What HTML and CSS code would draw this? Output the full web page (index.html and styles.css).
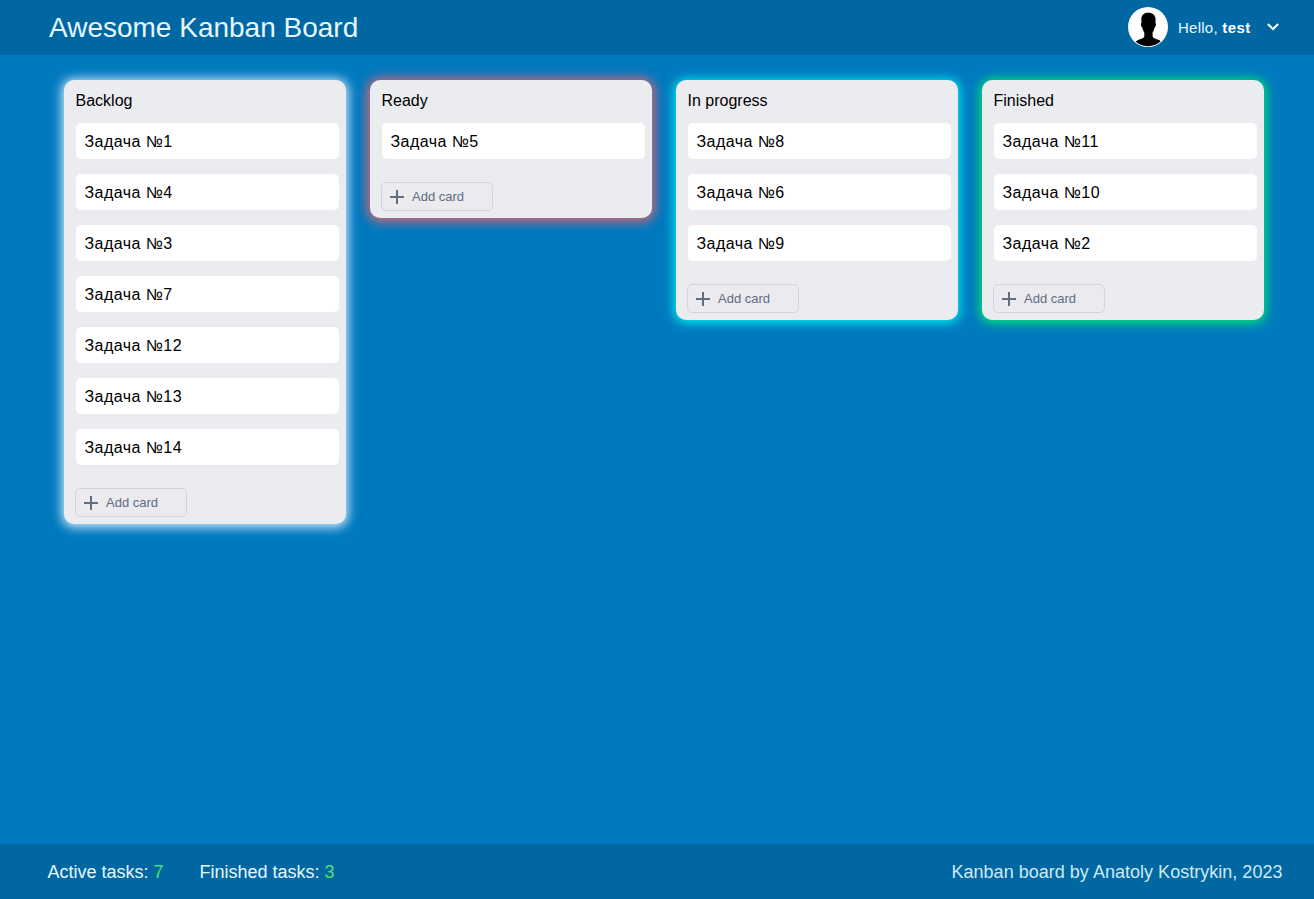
FILE: index.html
```html
<!DOCTYPE html>
<html lang="en">
<head>
<meta charset="utf-8">
<title>Awesome Kanban Board</title>
<link rel="stylesheet" href="styles.css">
</head>
<body>
<svg width="0" height="0" class="sprite">
  <symbol id="plus" viewBox="0 0 14 14"><path d="M6 0h2v6h6v2H8v6H6V8H0V6h6z" fill="currentColor"/></symbol>
</svg>
<header class="header">
  <h1 class="title">Awesome Kanban Board</h1>
  <div class="user">
    <svg class="avatar" viewBox="0 0 40 40">
      <defs><clipPath id="round"><circle cx="20" cy="20" r="19.2"/></clipPath></defs>
      <circle cx="20" cy="20" r="20" fill="#fff"/>
      <path clip-path="url(#round)" d="M20.200 5.800c-4.600 0-7 2.600-6.900 7l.2 3.200c-1 .3-.5 4 .8 4.500.4 2.200 1.100 3.800 2 4.900v3.400c0 1.800-1 2.500-3.300 3.100-2.600.7-4.600 1.500-6.500 4.100v6h28v-6c-1.900-2.600-4-3.400-6.600-4.100-2.300-.6-3.300-1.300-3.300-3.100v-3.400c.9-1.100 1.600-2.700 2-4.900 1.300-.5 1.800-4.200.8-4.500l.2-3.200c.1-4.400-2.800-7-7.400-7z" fill="#000"/>
    </svg>
    <span class="hello">Hello, <b>test</b></span>
    <svg class="chevron" viewBox="0 0 12 8"><path d="M.8 1l5.200 5 5.200-5" fill="none" stroke="#fff" stroke-width="2"/></svg>
  </div>
</header>
<main class="board">
  <section class="column backlog">
    <h2 class="name">Backlog</h2>
    <div class="cards">
      <div class="card">Задача №1</div><div class="card">Задача №4</div><div class="card">Задача №3</div><div class="card">Задача №7</div><div class="card">Задача №12</div><div class="card">Задача №13</div><div class="card">Задача №14</div>
    </div>
    <button class="add"><svg class="plus"><use href="#plus"/></svg>Add card</button>
  </section>
  <section class="column ready">
    <h2 class="name">Ready</h2>
    <div class="cards">
      <div class="card">Задача №5</div>
    </div>
    <button class="add"><svg class="plus"><use href="#plus"/></svg>Add card</button>
  </section>
  <section class="column progress">
    <h2 class="name">In progress</h2>
    <div class="cards">
      <div class="card">Задача №8</div><div class="card">Задача №6</div><div class="card">Задача №9</div>
    </div>
    <button class="add"><svg class="plus"><use href="#plus"/></svg>Add card</button>
  </section>
  <section class="column finished">
    <h2 class="name">Finished</h2>
    <div class="cards">
      <div class="card">Задача №11</div><div class="card">Задача №10</div><div class="card">Задача №2</div>
    </div>
    <button class="add"><svg class="plus"><use href="#plus"/></svg>Add card</button>
  </section>
</main>
<footer class="footer">
  <div class="stats"><span>Active tasks: <span class="count">7</span></span><span>Finished tasks: <span class="count">3</span></span></div>
  <div class="author">Kanban board by Anatoly Kostrykin, 2023</div>
</footer>
</body>
</html>
```
FILE: styles.css
```css
* { box-sizing: border-box; }
body {
  margin: 0;
  height: 100vh;
  display: flex;
  flex-direction: column;
  background: #0079bf;
  font-family: "Liberation Sans", Arial, sans-serif;
}
.sprite { display: none; }
.header, .footer {
  display: flex;
  align-items: center;
  justify-content: space-between;
  height: 55px;
  flex: none;
  background: #0067a3;
  color: #e6f7ff;
}
.header { padding: 0 35px 0 49px; }
.title { margin: 0; font-size: 28px; font-weight: 400; line-height: 32px; }
.user { display: flex; align-items: center; height: 40px; margin-bottom: 1px; }
.avatar { width: 40px; height: 40px; }
.hello { width: 73px; margin-left: 10px; font-size: 15px; letter-spacing: 0.25px; line-height: 16px; padding-top: 2px; white-space: nowrap; }
.hello b { color: #fff; letter-spacing: 0.45px; }
.chevron { width: 12px; height: 8px; margin-left: 16px; }
.board {
  flex: 1;
  display: flex;
  align-items: flex-start;
  gap: 24px;
  padding: 25px 50px 0 64px;
}
.column {
  width: 282px;
  padding: 12px 7px 7px 12px;
  border-radius: 10px;
  background: #ebecf0;
}
.backlog { box-shadow: 0 1px 11px 2px #d8efff; }
.ready { box-shadow: 0 1px 12px 2px #f0646c; }
.progress { box-shadow: 0 1px 11px 2px #00ecec; }
.finished { box-shadow: 0 1px 11px 2px #00ea70; }
.name { margin: 0 0 13px -0.5px; font-size: 16px; font-weight: 400; line-height: 18px; }
.cards { display: flex; flex-direction: column; gap: 15px; }
.card {
  height: 36px;
  padding: 0 8.5px;
  border-radius: 5px;
  background: #fff;
  font-size: 16px;
  line-height: 37px;
  letter-spacing: 0.44px;
}
.add {
  display: flex;
  align-items: center;
  gap: 8px;
  width: 112px;
  height: 29px;
  margin: 23px 0 0 -1px;
  padding: 0 8px;
  border: 1px solid #d3d4db;
  border-radius: 5px;
  background: #eaeaef;
  color: #5e6c84;
  font: 13px/16px "Liberation Sans", Arial, sans-serif;
}
.plus { width: 14px; height: 14px; }
.footer { padding: 0 31.5px 0 47.5px; font-size: 18px; line-height: 20px; }
.stats { display: flex; gap: 36px; }
.count { color: #4be36c; }
.author { color: #cdeaf7; letter-spacing: 0.02px; }
```
